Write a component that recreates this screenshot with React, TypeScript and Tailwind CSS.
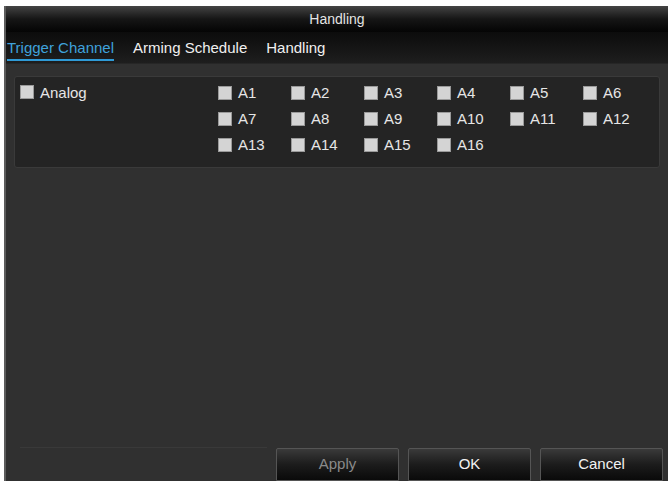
const channels = Array.from({ length: 16 }, (_, i) => `A${i + 1}`);

function Box() {
  return <span className="inline-block w-[14px] h-[14px] bg-[#d4d4d4] border border-[#9a9a9a] shrink-0" />;
}

export default function App() {
  return (
    <div
      className="w-[668px] h-[481px] bg-white pt-[6px] pl-[4px] overflow-hidden"
      style={{ fontFamily: '"Liberation Sans", Arial, sans-serif' }}
    >
      <div className="h-full flex flex-col bg-[#303030] border-l-2 border-[#5c5c5c]">
        <div className="h-[26px] shrink-0 flex items-center justify-center bg-gradient-to-b from-[#444] via-[#161616] to-[#050505] text-[14px] text-[#e4e4e4]">
          Handling
        </div>

        <div className="h-[31px] shrink-0 flex items-end gap-[19px] px-[1px] bg-gradient-to-b from-[#0c0c0c] to-[#1e1e1e] text-[15px] text-[#f0f0f0]">
          <span className="pb-[3px] mb-[2px] border-b-2 border-[#2f9ad6] text-[#3fa2dc] leading-[16px]">Trigger Channel</span>
          <span className="pb-[7px] leading-[16px]">Arming Schedule</span>
          <span className="pb-[7px] leading-[16px]">Handling</span>
        </div>

        <div className="flex-1 px-[8px] pt-[12px] border-t border-[#262626]">
          <div className="h-[92px] rounded-[3px] bg-[#242424] border border-[#3a3a3a] flex pt-[8px] pl-[5px] text-[15px] text-[#e6e6e6]">
            <div className="w-[198px] flex items-start gap-[6px]">
              <Box />
              <span className="leading-[15px]">Analog</span>
            </div>
            <div className="grid grid-cols-[repeat(6,73px)] gap-y-[11px] content-start">
              {channels.map((c) => (
                <div key={c} className="flex items-center gap-[6px]">
                  <Box />
                  <span className="leading-[15px]">{c}</span>
                </div>
              ))}
            </div>
          </div>
        </div>

        <div className="h-[34px] shrink-0 flex justify-end items-end gap-[9px] pr-[5px] pl-[14px]">
          <div className="flex-1 h-[34px] border-t border-[#393939]" />
          {[
            { label: "Apply", dim: true },
            { label: "OK", dim: false },
            { label: "Cancel", dim: false },
          ].map((b) => (
            <button
              key={b.label}
              className={`w-[123px] h-[33px] rounded-t-[2px] border border-[#555] bg-gradient-to-b from-[#3a3a3a] via-[#1c1c1c] to-[#0a0a0a] text-[15px] ${
                b.dim ? "text-[#8a8a8a]" : "text-[#f2f2f2]"
              }`}
            >
              {b.label}
            </button>
          ))}
        </div>
      </div>
    </div>
  );
}
